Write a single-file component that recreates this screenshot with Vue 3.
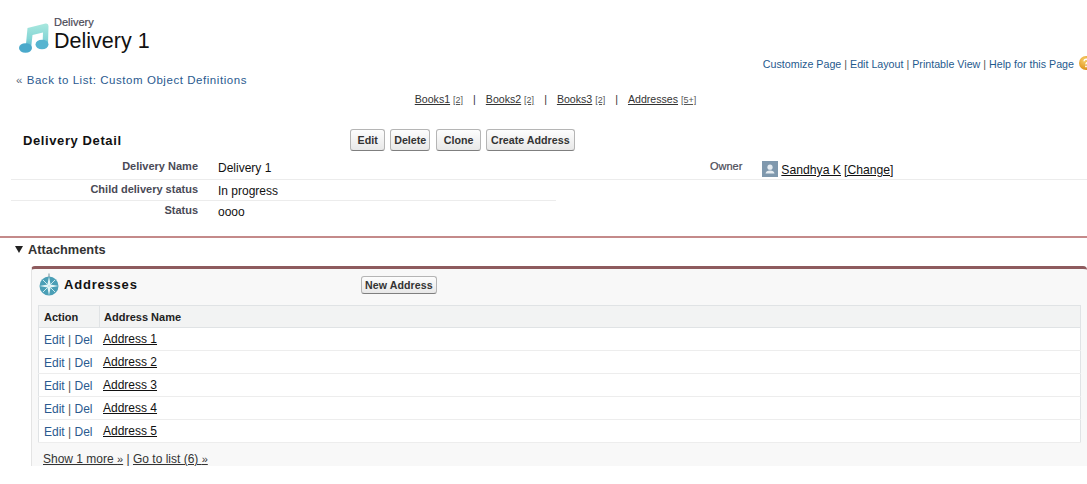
<template>
  <div class="page">
    <div class="top">
      <div class="title-row">
        <svg class="music-icon" viewBox="0 0 32 32" width="32" height="32">
          <defs>
            <linearGradient id="noteFill" x1="0" y1="0" x2="0" y2="1">
              <stop offset="0" stop-color="#a9e8de" />
              <stop offset="0.6" stop-color="#86d6d6" />
              <stop offset="1" stop-color="#4fb0cf" />
            </linearGradient>
          </defs>
          <path d="M9.5 6 L27.5 1.5 Q30.5 1 30.5 4 L30 23 L24.5 23 L25 10.5 L14.5 13 L13 27 L7.5 27 Z" fill="url(#noteFill)" />
          <ellipse cx="7.5" cy="26" rx="6.5" ry="4.8" fill="#4aa9cb" />
          <ellipse cx="24" cy="22.5" rx="6.5" ry="4.8" fill="#56b4d0" />
        </svg>
        <div class="titles">
          <div class="object-name">Delivery</div>
          <h1>Delivery 1</h1>
        </div>
      </div>
      <div class="page-links">
        <a>Customize Page</a><span class="sep"> | </span><a>Edit Layout</a><span class="sep"> | </span><a>Printable View</a><span class="sep"> | </span><a>Help for this Page</a>
        <svg class="help-dot" viewBox="0 0 14 14" width="14" height="14">
          <defs>
            <radialGradient id="helpFill" cx="0.4" cy="0.3" r="0.8">
              <stop offset="0" stop-color="#f8cf6b" />
              <stop offset="1" stop-color="#d9870f" />
            </radialGradient>
          </defs>
          <circle cx="7" cy="7" r="7" fill="url(#helpFill)" />
          <path d="M5 5.2 Q5.2 3.2 7 3.2 Q9 3.2 9 5 Q9 6.2 7.6 6.9 Q7 7.3 7 8.4" stroke="#fff" stroke-width="1.4" fill="none" />
          <circle cx="7" cy="10.4" r="0.9" fill="#fff" />
        </svg>
      </div>
    </div>

    <div class="back"><span>«</span> <a>Back to List: Custom Object Definitions</a></div>

    <div class="related">
      <template v-for="(item, i) in relatedLinks" :key="item.name">
        <span v-if="i > 0" class="rel-sep">|</span>
        <span class="rel-link"><u>{{ item.name }}</u> <small>{{ item.count }}</small></span>
      </template>
    </div>

    <div class="detail-head">
      <h2>Delivery Detail</h2>
      <div class="buttons">
        <button v-for="b in detailButtons" :key="b">{{ b }}</button>
      </div>
    </div>

    <div class="detail-row first">
      <div class="label">Delivery Name</div>
      <div class="value">Delivery 1</div>
      <div class="label owner-label">Owner</div>
      <div class="value owner">
        <svg class="avatar" viewBox="0 0 16 16" width="16" height="16">
          <rect width="16" height="16" fill="#7f98ad" />
          <circle cx="8" cy="6.2" r="2.6" fill="#e6ecf1" />
          <path d="M3.5 12.5 Q4 9.6 8 9.6 Q12 9.6 12.5 12.5 Z" fill="#e6ecf1" />
        </svg>
        <u>Sandhya K</u> <u>[Change]</u>
      </div>
    </div>
    <div class="detail-row short">
      <div class="label">Child delivery status</div>
      <div class="value">In progress</div>
    </div>
    <div class="detail-row short last">
      <div class="label">Status</div>
      <div class="value">oooo</div>
    </div>

    <div class="section-head">
      <span class="arrow"></span>
      <span>Attachments</span>
    </div>

    <div class="panel">
      <div class="panel-head">
        <svg class="compass" viewBox="0 0 22 24" width="22" height="24">
          <path d="M11 0.5 L11 4" stroke="#6f8f9a" stroke-width="1" />
          <circle cx="11" cy="13" r="9.5" fill="#4b9fb6" />
          <path d="M11 3.5 L12.6 11.4 L20.5 13 L12.6 14.6 L11 22.5 L9.4 14.6 L1.5 13 L9.4 11.4 Z" fill="#e4f5f6" />
          <path d="M4.8 6.8 L11 13 L17.2 6.8 M4.8 19.2 L11 13 L17.2 19.2" stroke="#cdeaee" stroke-width="1" fill="none" />
        </svg>
        <h3>Addresses</h3>
        <button class="new-btn">New Address</button>
      </div>
      <table>
        <thead>
          <tr>
            <th class="col-action">Action</th>
            <th class="name-head">Address Name</th>
          </tr>
        </thead>
        <tbody>
          <tr v-for="a in addresses" :key="a">
            <td class="col-action"><a>Edit</a><span class="sep"> | </span><a>Del</a></td>
            <td class="name-cell"><u>{{ a }}</u></td>
          </tr>
        </tbody>
      </table>
      <div class="panel-foot"><u>Show 1 more <small>»</small></u> | <u>Go to list (6) <small>»</small></u></div>
    </div>
  </div>
</template>

<script setup>
const relatedLinks = [
  { name: 'Books1', count: '[2]' },
  { name: 'Books2', count: '[2]' },
  { name: 'Books3', count: '[2]' },
  { name: 'Addresses', count: '[5+]' }
]
const detailButtons = ['Edit', 'Delete', 'Clone', 'Create Address']
const addresses = ['Address 1', 'Address 2', 'Address 3', 'Address 4', 'Address 5']
</script>

<style>
html, body {
  margin: 0;
  background: #fff;
  overflow: hidden;
}
</style>

<style scoped>
.page {
  width: 1087px;
  height: 484px;
  overflow: hidden;
  font-family: "Liberation Sans", Arial, sans-serif;
  font-size: 12px;
  color: #222;
  position: relative;
}

.top {
  display: flex;
  justify-content: space-between;
  height: 70px;
}
.title-row {
  display: flex;
  padding: 17px 0 0 18px;
}
.music-icon {
  margin-top: 5px;
}
.titles {
  margin-left: 4px;
}
.object-name {
  font-size: 11px;
  font-weight: 400;
  color: #4a4a56;
  line-height: 11px;
  -webkit-text-stroke: 0.2px #4a4a56;
}
h1 {
  margin: 0;
  font-size: 21.5px;
  font-weight: 400;
  line-height: 26px;
  color: #111;
}
.page-links {
  padding: 57px 0 0 0;
  margin-right: -6px;
  font-size: 10.7px;
  line-height: 14px;
  white-space: nowrap;
  display: flex;
  align-items: flex-start;
}
.page-links a {
  color: #1f5a8e;
}
.sep {
  color: #555;
  white-space: pre;
}
.help-dot {
  flex-shrink: 0;
  margin: -1px 0 0 5px;
}

.back {
  padding: 3px 0 0 16px;
  font-size: 11.5px;
  line-height: 14px;
  letter-spacing: 0.55px;
  color: #5a6a7a;
}
.back a {
  color: #2a5a8f;
}

.related {
  display: flex;
  justify-content: center;
  margin-top: 5px;
  padding-left: 24px;
  font-size: 10.6px;
  line-height: 14px;
  color: #333;
}
.rel-link small {
  font-size: 9px;
  text-decoration: underline;
  color: #555;
}
.rel-sep {
  margin: 0 10px;
}

.detail-head {
  display: flex;
  align-items: center;
  height: 24px;
  margin-top: 21px;
  padding-left: 23px;
}
h2 {
  margin: 0;
  width: 327px;
  font-size: 13px;
  font-weight: 700;
  letter-spacing: 0.6px;
  color: #111;
}
.buttons {
  display: flex;
  gap: 5px;
}
button {
  height: 22px;
  padding: 0 4px;
  border: 1px solid #b5b5b5;
  border-bottom-color: #7f7f7f;
  border-radius: 3px;
  background: linear-gradient(#fdfdfd, #e8e8e8);
  font-family: inherit;
  font-size: 10.7px;
  font-weight: 700;
  color: #333;
}
.buttons button:nth-child(1) {
  padding: 0 6.5px;
}
.buttons button:nth-child(2) {
  padding: 0 3px;
}
.buttons button:nth-child(3) {
  margin-left: 1px;
  padding: 0 6.5px;
}

.detail-row {
  display: flex;
  align-items: flex-start;
  margin-left: 11px;
  border-bottom: 1px solid #ececec;
}
.detail-row.first {
  height: 22px;
  margin-top: 4px;
  padding-top: 1px;
}
.detail-row.short {
  width: 545px;
  height: 20px;
}
.detail-row.last {
  border-bottom: none;
}
.label {
  width: 187px;
  text-align: right;
  font-size: 11px;
  font-weight: 700;
  color: #4a4a56;
  line-height: 15px;
  padding-top: 2px;
}
.value {
  margin-left: 20px;
  font-size: 12px;
  line-height: 16px;
  padding-top: 3px;
  color: #111;
}
.owner-label {
  width: 471px;
  font-weight: 400;
  -webkit-text-stroke: 0.2px #4a4a56;
}
.owner {
  display: flex;
  align-items: center;
  gap: 3px;
  margin-left: 20px;
}
.owner u {
  margin-top: 2px;
  font-size: 12.2px;
}

.section-head {
  display: flex;
  align-items: center;
  gap: 5px;
  margin-top: 15px;
  border-top: 2px solid #c48a8a;
  height: 22px;
  padding-left: 15px;
  font-size: 12.8px;
  font-weight: 700;
  color: #333;
}
.arrow {
  width: 0;
  height: 0;
  border-left: 4.5px solid transparent;
  border-right: 4.5px solid transparent;
  border-top: 7px solid #222;
}

.panel {
  margin-left: 31px;
  margin-top: 6px;
  height: 197px;
  border-top: 3px solid #8e5b5e;
  border-left: 1px solid #e4e4e4;
  border-radius: 4px 4px 0 0;
  background: #f8f8f8;
  padding: 0 6px;
}
.panel-head {
  display: flex;
  align-items: center;
  height: 31px;
  padding-bottom: 5px;
}
.compass {
  margin-top: 1px;
}
h3 {
  margin: 0 0 0 4px;
  width: 297px;
  font-size: 13px;
  font-weight: 700;
  letter-spacing: 0.8px;
  color: #111;
}
.new-btn {
  height: 18px;
  padding: 0 3px;
  font-size: 10.6px;
  letter-spacing: 0.1px;
}

table {
  width: 100%;
  border-collapse: collapse;
  background: #fff;
  border: 1px solid #e0e3e5;
}
th {
  height: 21px;
  padding: 0 5px;
  background: #f2f3f3;
  text-align: left;
  font-size: 11px;
  font-weight: 700;
  border-bottom: 1px solid #e0e3e5;
  color: #222;
}
th.col-action {
  border-right: 1px solid #e0e3e5;
}
th.name-head {
  padding-left: 4px;
}
.col-action {
  width: 50px;
}
td {
  height: 20px;
  padding: 2px 5px 0;
  border-bottom: 1px solid #ededed;
  font-size: 12px;
}
td a {
  color: #2a5a8f;
}
td.name-cell {
  height: 22px;
  padding: 0 5px 0 3.5px;
  color: #111;
}
.panel-foot {
  margin: 9px 0 0 5px;
  font-size: 12px;
  line-height: 14px;
  color: #333;
}
.panel-foot small {
  font-size: 11px;
}
</style>
